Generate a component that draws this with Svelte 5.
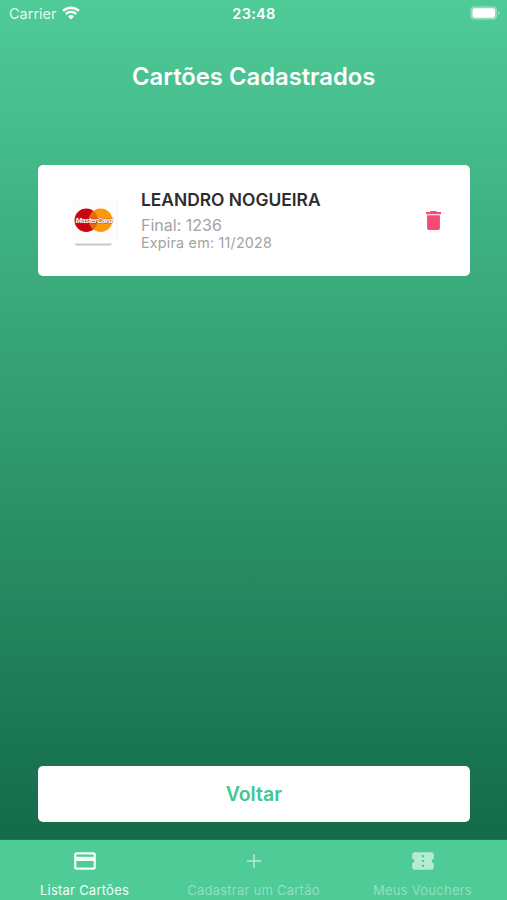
<script lang="ts">
  interface SavedCard {
    id: number;
    holder: string;
    lastDigits: string;
    expires: string;
  }

  let cards = $state<SavedCard[]>([
    { id: 1, holder: 'LEANDRO NOGUEIRA', lastDigits: '1236', expires: '11/2028' },
  ]);

  const TABS = [
    { id: 'list', label: 'Listar Cartões' },
    { id: 'add', label: 'Cadastrar um Cartão' },
    { id: 'vouchers', label: 'Meus Vouchers' },
  ];

  let activeTab = $state('list');

  function removeCard(id: number) {
    cards = cards.filter(c => c.id !== id);
  }
</script>

<div class="screen">
  <header class="status-bar">
    <div class="carrier">
      <span>Carrier</span>
      <svg class="wifi" viewBox="0 0 18 14" width="18" height="14">
        <path d="M1.1 4.9a11.300 11.300 0 0 1 15.800 0" />
        <path d="M3.8 8a7.500 7.500 0 0 1 10.400 0" />
        <path class="dot" d="M9 13.500 6 10.500a4.300 4.300 0 0 1 6 0z" />
      </svg>
    </div>
    <span class="time">23:48</span>
    <svg class="battery" viewBox="0 0 31 14" width="31" height="14">
      <rect x="0.300" y="0.200" width="26.800" height="13.600" rx="4" fill="#fff" fill-opacity="0.35" />
      <rect x="2.600" y="2.300" width="22.400" height="9.400" rx="2.200" fill="#fff" />
      <path d="M28.200 4.800c2 .8 2 3.600 0 4.400z" fill="#fff" fill-opacity="0.4" />
    </svg>
  </header>

  <main class="content">
    <h1 class="title">Cartões Cadastrados</h1>

    <div class="card-list">
      {#each cards as card (card.id)}
        <article class="card">
          <div class="brand">
            <svg viewBox="0 0 50 50" width="50" height="50">
              <rect x="3" y="3" width="45" height="42" fill="#fcfcfc" />
              <path d="M48.500 4v40" stroke="#f5f5f5" />
              <circle cx="17.200" cy="24.200" r="11.700" fill="#cb0610" />
              <circle cx="31.700" cy="24.200" r="11.700" fill="#fd9909" />
              <path d="M24.450 15a11.700 11.700 0 0 1 0 18.400a11.700 11.700 0 0 1 0-18.400" fill="#e9660f" />
              <text class="brand-name" x="6.500" y="26.800">MasterCard</text>
              <path d="M5.500 47.500h37.500l-1.500 2h-34.500z" fill="#c7c7c7" />
            </svg>
          </div>
          <div class="info">
            <strong class="holder">{card.holder}</strong>
            <span class="digits">Final: {card.lastDigits}</span>
            <span class="expires">Expira em: {card.expires}</span>
          </div>
          <button class="remove" aria-label="Remover cartão" onclick={() => removeCard(card.id)}>
            <svg viewBox="5 3 14 18" width="15" height="19" preserveAspectRatio="none">
              <path d="M6 19c0 1.100.9 2 2 2h8c1.100 0 2-.9 2-2V7H6v12zM19 4h-3.500l-1-1h-5l-1 1H5v2h14V4z" fill="#f64b75" />
            </svg>
          </button>
        </article>
      {/each}
    </div>

    <button class="back"><span>Voltar</span></button>
  </main>

  <nav class="tab-bar">
    {#each TABS as tab (tab.id)}
      <button class="tab" class:active={activeTab === tab.id} onclick={() => (activeTab = tab.id)}>
        <svg viewBox="0 0 24 24" width="26" height="26" fill="currentColor">
          {#if tab.id === 'list'}
            <path d="M20 4H4c-1.110 0-1.990.89-1.990 2L2 18c0 1.110.89 2 2 2h16c1.110 0 2-.89 2-2V6c0-1.110-.89-2-2-2zm0 14H4v-6h16v6zm0-10H4V6h16v2z" />
          {:else if tab.id === 'add'}
            <path d="M18.500 12.700h-5.800v5.800h-1.400v-5.800H5.500v-1.400h5.800V5.500h1.400v5.800h5.800z" />
          {:else}
            <path d="M20 12c0-1.100.9-2 2-2V6c0-1.100-.9-2-2-2H4c-1.100 0-1.990.9-1.990 2v4c1.100 0 1.990.9 1.990 2s-.89 2-2 2v4c0 1.100.9 2 2 2h16c1.100 0 2-.9 2-2v-4c-1.100 0-2-.9-2-2zm-7 5.500h-2v-2h2v2zm0-4.500h-2v-2h2v2zm0-4.500h-2v-2h2v2z" />
          {/if}
        </svg>
        <span class="tab-label">{tab.label}</span>
      </button>
    {/each}
  </nav>
</div>

<style>
  :global(body) {
    margin: 0;
  }

  .screen {
    display: flex;
    flex-direction: column;
    width: 507px;
    height: 900px;
    overflow: hidden;
    font-family: Inter, 'Liberation Sans', sans-serif;
    background: linear-gradient(#4fcb98 0, #136b49 840px);
  }

  button {
    border: 0;
    padding: 0;
    background: none;
    font-family: inherit;
    cursor: pointer;
  }

  .status-bar {
    display: grid;
    grid-template-columns: 1fr auto 1fr;
    align-items: center;
    height: 27px;
    padding: 0 6px 0 9px;
    color: #fff;
    font-size: 14.5px;
  }

  .carrier {
    display: flex;
    align-items: center;
    gap: 5px;
    color: #e2f9ee;
  }

  .wifi {
    margin-top: -1px;
  }

  .wifi path {
    fill: none;
    stroke: #fff;
    stroke-width: 2.4;
  }

  .wifi .dot {
    fill: #fff;
    stroke: none;
  }

  .time {
    margin-right: 2px;
    font-weight: 600;
    letter-spacing: 0.3px;
  }

  .battery {
    justify-self: end;
    margin-top: -1px;
  }

  .content {
    display: flex;
    flex: 1;
    flex-direction: column;
    padding: 0 37px 18px 37.5px;
  }

  .title {
    margin: 35px 0 0;
    color: #fff;
    font-size: 23.8px;
    font-weight: 600;
    line-height: 30px;
    text-align: center;
    white-space: nowrap;
  }

  .card-list {
    flex: 1;
    margin-top: 72.7px;
  }

  .card {
    display: flex;
    align-items: center;
    box-sizing: border-box;
    height: 111px;
    padding: 0 29px 0 31px;
    border-radius: 5px;
    background: #fff;
  }

  .brand {
    width: 50px;
    height: 50px;
    margin-top: 1px;
  }

  .brand svg {
    overflow: visible;
  }

  .brand-name {
    fill: #fff;
    stroke: #96342e;
    stroke-opacity: 0.7;
    stroke-width: 0.9px;
    paint-order: stroke;
    font-family: 'Liberation Sans', sans-serif;
    font-size: 7.6px;
    font-style: italic;
    font-weight: 700;
    letter-spacing: -0.5px;
  }

  .info {
    display: flex;
    flex: 1;
    flex-direction: column;
    padding-left: 22.5px;
    color: #a3a3a3;
  }

  .holder {
    margin-bottom: 5px;
    color: #2d2d2f;
    font-size: 17.4px;
    font-weight: 600;
    line-height: 22px;
  }

  .digits {
    font-size: 16px;
    line-height: 18px;
  }

  .expires {
    font-size: 14.3px;
    line-height: 18px;
    letter-spacing: 0.22px;
  }

  .remove {
    display: flex;
  }

  .back {
    height: 56.5px;
    border-radius: 5px;
    background: #fff;
    color: #43c592;
    font-size: 19.5px;
    font-weight: 600;
  }

  .tab-bar {
    display: grid;
    grid-template-columns: repeat(3, 1fr);
    height: 60px;
    background: #4fcb98;
    box-shadow: 0 -1px 0 rgba(57, 153, 112, 0.3);
  }

  .tab {
    display: flex;
    flex-direction: column;
    align-items: center;
    padding-top: 8px;
    color: #b5ebd3;
    font-size: 13px;
    white-space: nowrap;
  }

  .tab.active {
    color: #f0fff8;
  }

  .tab-label {
    margin-top: 7px;
    line-height: 18px;
    letter-spacing: 0.24px;
  }

  .tab:not(.active) .tab-label {
    color: #91dfbd;
  }
</style>
